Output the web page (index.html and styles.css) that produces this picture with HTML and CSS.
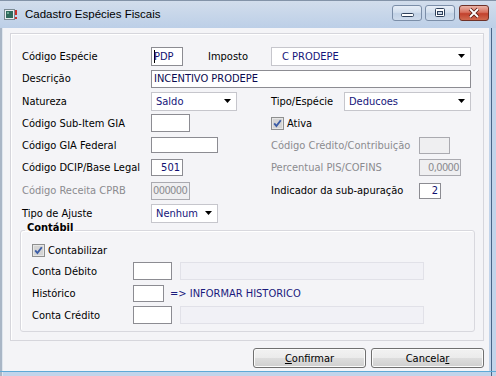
FILE: index.html
```html
<!DOCTYPE html>
<html>
<head>
<meta charset="utf-8">
<link rel="stylesheet" href="styles.css">
</head>
<body>
<div class="window">
  <div class="titlebar">
    <svg class="appicon" width="14" height="11" viewBox="0 0 14 11">
      <rect x="0.5" y="0.5" width="10" height="10" fill="#e8ecef" stroke="#7b8a93"/>
      <rect x="2" y="2" width="7" height="7" fill="#2f6a5c"/>
      <rect x="3" y="3" width="2" height="2" fill="#6fa894"/>
      <rect x="11" y="1" width="2" height="5" fill="#c8302a"/>
      <rect x="11" y="8" width="2" height="2" fill="#c8302a"/>
    </svg>
    <span class="title">Cadastro Espécies Fiscais</span>
    <div class="tbtns">
      <div class="tbtn">
        <svg width="30" height="16" viewBox="0 0 30 16"><rect x="9.5" y="8.5" width="12" height="3" rx="1" fill="#fff" stroke="#2e405a"/></svg>
      </div>
      <div class="tbtn">
        <svg width="30" height="16" viewBox="0 0 30 16"><rect x="10.5" y="3.5" width="9" height="8" rx="1" fill="#fff" stroke="#2e405a"/><rect x="12.5" y="6.5" width="5" height="3" fill="#c9d6e6" stroke="#2e405a"/></svg>
      </div>
      <div class="tbtn close">
        <svg width="30" height="16" viewBox="0 0 30 16"><path d="M11 4 L19 12 M19 4 L11 12" stroke="#5b1d14" stroke-width="3.6"/><path d="M11 4 L19 12 M19 4 L11 12" stroke="#fff" stroke-width="1.8"/></svg>
      </div>
    </div>
  </div>
  <div class="frame">
    <div class="client">
      <div class="panel">
        <div class="row">
          <span class="c1">Código Espécie</span>
          <div class="c2">
            <div class="field w32 h19"><span class="caret"></span>PDP</div>
            <span class="imposto">Imposto</span>
          </div>
          <div class="select w200 h19 pad10"><span>C PRODEPE</span><svg class="arrow" width="7" height="4" viewBox="0 0 7 4"><path d="M0 0H7L3.5 4Z" fill="#000"/></svg></div>
        </div>
        <div class="row h23">
          <span class="c1">Descrição</span>
          <div class="field w320 dark">INCENTIVO PRODEPE</div>
        </div>
        <div class="row">
          <span class="c1">Natureza</span>
          <div class="c2">
            <div class="select w86"><span>Saldo</span><svg class="arrow" width="7" height="4" viewBox="0 0 7 4"><path d="M0 0H7L3.5 4Z" fill="#000"/></svg></div>
          </div>
          <span class="c3n">Tipo/Espécie</span>
          <div class="select w127"><span>Deducoes</span><svg class="arrow" width="7" height="4" viewBox="0 0 7 4"><path d="M0 0H7L3.5 4Z" fill="#000"/></svg></div>
        </div>
        <div class="row">
          <span class="c1">Código Sub-Item GIA</span>
          <div class="c2"><div class="field w39"></div></div>
          <label class="chk">
            <svg width="13" height="13" viewBox="0 0 13 13"><rect x="0.5" y="0.5" width="12" height="12" fill="#e6e6e6" stroke="#8e8f8f"/><rect x="2" y="2" width="9" height="9" fill="#d4d4d4"/><path d="M3.2 6.4 L5.4 9 L9.8 3.2" fill="none" stroke="#3b5ca6" stroke-width="1.9"/></svg>
            <span>Ativa</span>
          </label>
        </div>
        <div class="row">
          <span class="c1">Código GIA Federal</span>
          <div class="c2"><div class="field w67 h16"></div></div>
          <span class="c3w dim">Código Crédito/Contribuição</span>
          <div class="field w31 h17 dis"></div>
        </div>
        <div class="row h23">
          <span class="c1">Código DCIP/Base Legal</span>
          <div class="c2"><div class="field w32 h17 r">501</div></div>
          <span class="c3w dim">Percentual PIS/COFINS</span>
          <div class="field w42 h17 r dis num">0,0000</div>
        </div>
        <div class="row h23">
          <span class="c1 dim">Código Receita CPRB</span>
          <div class="c2"><div class="field w39 dis num">000000</div></div>
          <span class="c3w">Indicador da sub-apuração</span>
          <div class="field w22 h16 r">2</div>
        </div>
        <div class="row">
          <span class="c1">Tipo de Ajuste</span>
          <div class="c2">
            <div class="select w67"><span>Nenhum</span><svg class="arrow" width="7" height="4" viewBox="0 0 7 4"><path d="M0 0H7L3.5 4Z" fill="#000"/></svg></div>
          </div>
        </div>
        <fieldset class="group">
          <legend>Contábil</legend>
          <div class="grow first">
            <label class="chk">
              <svg width="13" height="13" viewBox="0 0 13 13"><rect x="0.5" y="0.5" width="12" height="12" fill="#e6e6e6" stroke="#8e8f8f"/><rect x="2" y="2" width="9" height="9" fill="#d4d4d4"/><path d="M3.2 6.4 L5.4 9 L9.8 3.2" fill="none" stroke="#3b5ca6" stroke-width="1.9"/></svg>
              <span>Contabilizar</span>
            </label>
          </div>
          <div class="grow">
            <span class="gl">Conta Débito</span>
            <div class="field w39"></div>
            <div class="ghost"></div>
          </div>
          <div class="grow">
            <span class="gl">Histórico</span>
            <div class="field w31 h17"></div>
            <span class="hist">=&gt; INFORMAR HISTORICO</span>
          </div>
          <div class="grow">
            <span class="gl">Conta Crédito</span>
            <div class="field w39"></div>
            <div class="ghost"></div>
          </div>
        </fieldset>
      </div>
      <div class="actions">
        <div class="btn"><u>C</u>onfirmar</div>
        <div class="btn">Cancela<u>r</u></div>
      </div>
    </div>
  </div>
</div>
</body>
</html>
```

FILE: styles.css
```css
html, body {
  margin: 0;
  padding: 0;
  background: #fff;
}

body {
  font-family: "DejaVu Sans Condensed", "Liberation Sans", sans-serif;
  font-size: 11px;
  color: #000;
}

.window {
  width: 496px;
  height: 376px;
  display: flex;
  flex-direction: column;
  overflow: hidden;
  background: #c2d4ea;
}

.titlebar {
  height: 28px;
  flex: none;
  display: flex;
  align-items: flex-start;
  box-sizing: border-box;
  padding: 0 7px 0 4px;
  background: linear-gradient(#d2ddec, #bccfe7);
  border-top: 1px solid #8393a8;
}

.appicon {
  margin-top: 8px;
  flex: none;
}

.title {
  margin-left: 7px;
  margin-top: 6px;
  font-family: "Liberation Sans", sans-serif;
  font-size: 11.5px;
  line-height: 15px;
  color: #000;
}

.tbtns {
  margin-left: auto;
  margin-top: 4px;
  display: flex;
  gap: 3px;
}

.tbtn {
  width: 30px;
  height: 16px;
  box-sizing: border-box;
  border: 1px solid #7b8ea8;
  border-radius: 3px;
  background: linear-gradient(#e7eef7 0%, #d3dfee 45%, #c2d2e6 55%, #cfdcec 100%);
  display: flex;
  align-items: center;
  justify-content: center;
  overflow: hidden;
}

.tbtn svg {
  flex: none;
}

.tbtn.close {
  margin-left: 1px;
  border-color: #6e3128;
  background: linear-gradient(#eab3a6 0%, #d8705e 45%, #c2412d 55%, #d06a50 100%);
}

.frame {
  flex: 1;
  display: flex;
  padding: 0 7px 5px 3px;
  background:
    linear-gradient(to bottom, transparent 343px, #5fa9d6 343px, #5fa9d6 344px, transparent 344px),
    linear-gradient(to right, transparent 491px, #4a6588 491px, #4a6588 492px, transparent 492px),
    linear-gradient(to right, #a9b6c6 0, #a9b6c6 2px, #dfe6ee 2px, #dfe6ee 3px, #c2d4ea 3px);
}

.client {
  flex: 1;
  background: #f4f4f7;
  display: flex;
  flex-direction: column;
}

.panel {
  margin: 5px 5px 0 7px;
  height: 308px;
  box-sizing: border-box;
  border: 1px solid #d6d6dc;
  box-shadow: inset 1px 1px 0 #ffffff;
  padding: 11px 0 0 11px;
  background: #f4f4f7;
}

.row {
  display: flex;
  align-items: center;
  height: 22px;
}

.row.h23 {
  height: 23px;
}

.c1 {
  width: 129px;
  flex: none;
  white-space: nowrap;
}

.c2 {
  width: 120px;
  flex: none;
  display: flex;
  align-items: center;
}

.c3w {
  width: 148px;
  flex: none;
  white-space: nowrap;
}

.c3n {
  width: 73px;
  flex: none;
  white-space: nowrap;
}

.imposto {
  margin-left: 25px;
  white-space: nowrap;
}

.dim {
  color: #8b8b8f;
}

.field {
  box-sizing: border-box;
  height: 18px;
  flex: none;
  border: 1px solid #8c8c92;
  background: #fff;
  color: #101070;
  padding: 0 2px;
  display: flex;
  align-items: center;
  white-space: nowrap;
  overflow: hidden;
}

.field.dark {
  color: #0a0a50;
}

.field.r {
  justify-content: flex-end;
}

.field.dis {
  background: #efeff1;
  border-color: #aaaab0;
  color: #8b8b8f;
  padding: 0 1px;
}

.field.num {
  letter-spacing: -0.6px;
}

.h16 { height: 16px; }
.h17 { height: 17px; }
.h19 { height: 19px; }

.w22 { width: 22px; }
.w31 { width: 31px; }
.w32 { width: 32px; }
.w39 { width: 39px; }
.w42 { width: 42px; }
.w67 { width: 67px; }
.w86 { width: 86px; }
.w127 { width: 127px; }
.w200 { width: 200px; }
.w320 { width: 320px; }

.caret {
  width: 1px;
  height: 13px;
  background: #000;
  margin-right: -1px;
  flex: none;
}

.select {
  box-sizing: border-box;
  height: 19px;
  flex: none;
  border: 1px solid #c6c6cc;
  background: #fff;
  color: #14147a;
  display: flex;
  align-items: center;
  padding-left: 4px;
  white-space: nowrap;
}

.select.pad10 {
  padding-left: 10px;
}

.select .arrow {
  margin-left: auto;
  margin-right: 5px;
  flex: none;
}

.chk {
  display: flex;
  align-items: center;
  gap: 3px;
}

.chk svg {
  flex: none;
}

.group {
  margin: -3px 0 0 -2px;
  width: 455px;
  box-sizing: border-box;
  border: 1px solid #d8d8de;
  border-radius: 3px;
  padding: 0 11px 5px 11px;
  min-width: 0;
  box-shadow: inset 1px 1px 0 #ffffff;
}

.group legend {
  margin-left: -7px;
  padding: 0 2px 6px 2px;
  font-weight: bold;
  line-height: 13px;
}

.grow {
  display: flex;
  align-items: center;
  height: 22px;
}

.grow.first {
  height: 20px;
}

.gl {
  width: 101px;
  flex: none;
  white-space: nowrap;
}

.ghost {
  margin-left: 8px;
  width: 244px;
  height: 18px;
  box-sizing: border-box;
  border: 1px solid #e1e1e8;
  background: #f1f1f6;
  flex: none;
}

.hist {
  margin-left: 6px;
  color: #1a1a7c;
  white-space: nowrap;
}

.actions {
  margin-top: 7px;
  display: flex;
  justify-content: flex-end;
  gap: 5px;
  padding-right: 5px;
}

.btn {
  width: 113px;
  height: 20px;
  box-sizing: border-box;
  border: 1px solid #707070;
  border-radius: 3px;
  background: linear-gradient(#f2f2f2 0%, #ebebeb 50%, #dddddd 51%, #cfcfcf 100%);
  box-shadow: inset 0 0 0 1px #fbfbfb;
  display: flex;
  align-items: center;
  justify-content: center;
  color: #000;
}
```
